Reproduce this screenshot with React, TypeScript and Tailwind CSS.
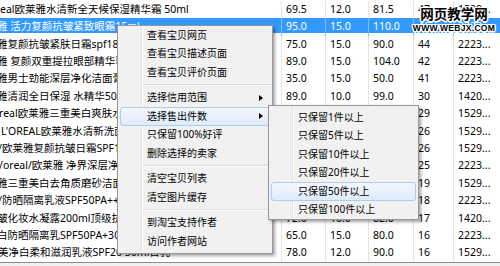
const ROWS = [
  { name: "eal欧莱雅水清新全天候保湿精华霜 50ml", shift: "ml-0", cols: ["69.5", "12.0", "81.5", "47", "1529..."] },
  { name: "雅 活力复颜抗皱紧致眼霜15ml", shift: "ml-[-3px]", cols: ["95.0", "15.0", "110.0", "46", "2223..."], selected: true },
  { name: "雅复颜抗皱紧肤日霜spf18 50ml", shift: "ml-[-3px]", cols: ["75.0", "15.0", "90.0", "44", "2223..."] },
  { name: "雅 复颜双重提拉眼部精华乳", shift: "ml-[-3px]", cols: ["89.0", "15.0", "104.0", "42", "2223..."] },
  { name: "雅男士劲能深层净化洁面膏", shift: "ml-[-3px]", cols: ["35.0", "15.0", "50.0", "41", "2223..."] },
  { name: "雅清润全日保湿 水精华50ML", shift: "ml-[-3px]", cols: ["89.0", "10.0", "99.0", "30", "1420..."] },
  { name: "real欧莱雅三重美白爽肤水", shift: "ml-[-1px]", cols: ["85.0", "12.0", "97.0", "29", "1529..."] },
  { name: "L'OREAL欧莱雅水清新洗面奶", shift: "ml-[1px]", cols: ["49.0", "12.0", "61.0", "26", "1529..."] },
  { name: "/欧莱雅复颜抗皱日霜SPF18", shift: "ml-[-2px]", cols: ["99.0", "12.0", "111.0", "26", "1529..."] },
  { name: "/oreal/欧莱雅 净界深层净化", shift: "ml-[-1px]", cols: ["45.0", "15.0", "60.0", "25", "2223..."] },
  { name: "雅三重美白去角质磨砂洁面", shift: "ml-[-3px]", cols: ["55.0", "12.0", "67.0", "19", "1529..."] },
  { name: "/防晒隔离乳液SPF50PA++", shift: "ml-[-2px]", cols: ["65.0", "15.0", "80.0", "18", "2223..."] },
  { name: "皱化妆水凝露200ml顶级抗皱", shift: "ml-[-3px]", cols: ["72.0", "10.0", "82.0", "17", "1420..."] },
  { name: "白防晒隔离乳SPF50PA+30ml", shift: "ml-[-3px]", cols: ["65.0", "15.0", "80.0", "16", "2223..."] },
  { name: "美净白柔和滋润乳液SPF20 50ml日乳", shift: "ml-[-2px]", cols: ["78.0", "12.0", "90.0", "16", "1529..."] },
];

const COL_W = ["w-[44px]", "w-[43px]", "w-[45px]", "w-[40px]", "flex-1"];

function Row({ row }: { row: (typeof ROWS)[number] }) {
  const sel = row.selected;
  return (
    <div
      className={`flex h-[17.4px] items-center ${
        sel ? "bg-[linear-gradient(#3399ff_0,#3399ff_15px,transparent_15px)] text-white" : "text-black"
      }`}
    >
      <div className="h-full w-[281px] shrink-0 overflow-hidden">
        <div className={`flex h-full items-center whitespace-nowrap ${row.shift}`}>{row.name}</div>
      </div>
      {row.cols.map((c, i) => (
        <div
          key={i}
          className={`flex h-full shrink-0 items-center whitespace-nowrap border-l pl-[4px] ${COL_W[i]} ${
            sel ? "border-[#7fbcf7]" : "border-[#e4e4e4]"
          }`}
        >
          {c}
        </div>
      ))}
    </div>
  );
}

function MenuItem({ label, arrow, active }: { label: string; arrow?: boolean; active?: boolean }) {
  return (
    <div
      className={`mx-[2px] flex h-[18.5px] items-center rounded-[3px] border pl-[26px] pr-[6px] ${
        active ? "border-[#aecbf0] bg-[linear-gradient(to_bottom,#f3f8fe,#dfeafa)]" : "border-transparent"
      }`}
    >
      <span className="whitespace-nowrap">{label}</span>
      {arrow && <span className="ml-auto h-0 w-0 border-y-[3.5px] border-l-[4px] border-y-transparent border-l-black" />}
    </div>
  );
}

function Sep() {
  return (
    <div className="flex h-[7px] items-center pl-[25px] pr-[1px]">
      <div className="h-[2px] w-full border-t border-[#dcdcdc] bg-white" />
    </div>
  );
}

const menuBox =
  "absolute border border-[#979797] bg-[#f1f1f1] bg-[linear-gradient(to_right,transparent_23px,#e2e3e3_23px,#e2e3e3_24px,#ffffff_24px,#ffffff_25px,transparent_25px)] shadow-[2px_2px_3px_rgba(0,0,0,0.35)] text-[10px] text-black";

const outline =
  "[text-shadow:-1px_-1px_0_#fff,1px_-1px_0_#fff,-1px_1px_0_#fff,1px_1px_0_#fff,0_-1.5px_0_#fff,0_1.5px_0_#fff,-1.5px_0_0_#fff,1.5px_0_0_#fff]";

export default function App() {
  return (
    <div className="relative h-[266px] w-[500px] overflow-hidden bg-white font-['Noto_Sans','Noto_Sans_CJK_SC',sans-serif] text-[10.5px]">
      <div className="pt-px">
        {ROWS.map((r, i) => (
          <Row key={i} row={r} />
        ))}
      </div>
      <div className="h-[4px] border-t border-[#8c8c8c] bg-[#f0f0f0]" />

      {/* watermark */}
      <div className="absolute left-[414px] top-[5px] flex w-[80px] flex-col items-center text-black">
        <div className={`text-[13.5px] font-bold leading-[18px] ${outline}`}>网页教学网</div>
        <div className={`font-['Liberation_Sans',sans-serif] text-[8.5px] font-bold leading-[10px] tracking-[0.3px] ${outline}`}>
          WWW.WEBJX.COM
        </div>
      </div>

      {/* context menu */}
      <div className={`${menuBox} left-[117px] top-[25px] w-[156px] pb-[2px]`}>
        <MenuItem label="查看宝贝网页" />
        <MenuItem label="查看宝贝描述页面" />
        <MenuItem label="查看宝贝评价页面" />
        <Sep />
        <MenuItem label="选择信用范围" arrow />
        <MenuItem label="选择售出件数" arrow active />
        <MenuItem label="只保留100%好评" />
        <MenuItem label="删除选择的卖家" />
        <Sep />
        <MenuItem label="清空宝贝列表" />
        <MenuItem label="清空图片缓存" />
        <Sep />
        <MenuItem label="到淘宝支持作者" />
        <MenuItem label="访问作者网站" />
      </div>

      {/* submenu */}
      <div className={`${menuBox} left-[268px] top-[105px] w-[151px] pt-[2px]`}>
        <MenuItem label="只保留1件以上" />
        <MenuItem label="只保留5件以上" />
        <MenuItem label="只保留10件以上" />
        <MenuItem label="只保留20件以上" />
        <MenuItem label="只保留50件以上" active />
        <MenuItem label="只保留100件以上" />
      </div>
    </div>
  );
}
